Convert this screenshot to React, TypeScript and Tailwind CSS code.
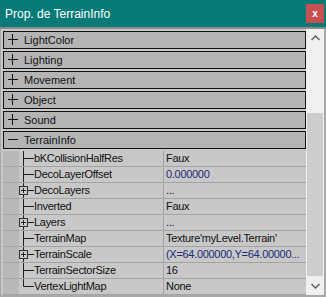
import React from "react";

const categories = [
  { name: "LightColor", open: false },
  { name: "Lighting", open: false },
  { name: "Movement", open: false },
  { name: "Object", open: false },
  { name: "Sound", open: false },
  { name: "TerrainInfo", open: true },
];

const props = [
  { name: "bKCollisionHalfRes", value: "Faux", kids: false, blue: false },
  { name: "DecoLayerOffset", value: "0.000000", kids: false, blue: true },
  { name: "DecoLayers", value: "...", kids: true, blue: false },
  { name: "Inverted", value: "Faux", kids: false, blue: false },
  { name: "Layers", value: "...", kids: true, blue: false },
  { name: "TerrainMap", value: "Texture'myLevel.Terrain'", kids: false, blue: false },
  { name: "TerrainScale", value: "(X=64.000000,Y=64.00000...", kids: true, blue: true },
  { name: "TerrainSectorSize", value: "16", kids: false, blue: false },
  { name: "VertexLightMap", value: "None", kids: false, blue: false },
];

function Category({ name, open }: { name: string; open: boolean }) {
  return (
    <div className="h-[18px] w-[303px] bg-[#b4b4b4] border border-[#111] flex items-center">
      <svg width="20" height="16" className="shrink-0">
        <line x1="4" y1="7.5" x2="14" y2="7.5" stroke="#111" strokeWidth="1" />
        {!open && <line x1="8.5" y1="2" x2="8.5" y2="13" stroke="#111" strokeWidth="1" />}
      </svg>
      <span className="text-[11px] text-[#111] leading-none">{name}</span>
    </div>
  );
}

function TreeMark({ kids, last }: { kids: boolean; last: boolean }) {
  return (
    <svg width="15" height="15" className="shrink-0">
      <line x1="4.5" y1="0" x2="4.5" y2={last ? 7.5 : 15} stroke="#222" strokeWidth="1" />
      <line x1="4.5" y1="7.5" x2="15" y2="7.5" stroke="#222" strokeWidth="1" />
      {kids && (
        <g>
          <rect x="0.5" y="3.5" width="8" height="8" fill="#c8c8c8" stroke="#333" strokeWidth="1" />
          <line x1="2" y1="7.5" x2="7" y2="7.5" stroke="#222" strokeWidth="1" />
          <line x1="4.5" y1="5" x2="4.5" y2="10" stroke="#222" strokeWidth="1" />
        </g>
      )}
    </svg>
  );
}

export default function App() {
  return (
    <div
      className="w-[326px] h-[297px] flex flex-col bg-[#c8c8c8] overflow-hidden"
      style={{ fontFamily: '"Liberation Sans", Arial, sans-serif' }}
    >
      <div className="h-[27px] bg-[#077977] flex items-center justify-between pl-[5px] pr-[2px] shrink-0">
        <span className="text-white text-[12px]">Prop. de TerrainInfo</span>
        <div className="w-[18px] h-[19px] bg-[#c75050] flex items-center justify-center">
          <span className="text-white text-[10px] font-bold leading-none">x</span>
        </div>
      </div>
      <div className="h-[2px] bg-[#8c8c8c] shrink-0" />
      <div className="flex flex-1 min-h-0 border-l border-l-[#a8a8a8] border-r-2 border-r-[#a8a8a8] border-b-2 border-b-[#a8a8a8]">
        <div className="flex-1 pl-[2px] pt-[2px] flex flex-col gap-[2px]">
          {categories.map((c) => (
            <Category key={c.name} name={c.name} open={c.open} />
          ))}
          <div className="flex flex-col w-[303px]">
            {props.map((p, i) => (
              <div key={p.name} className="h-[16px] flex border-b border-[#a4a4a4]">
                <div className="w-[16px] bg-[#b9b9b9] shrink-0" />
                <div className="w-[145px] flex items-center border-r border-[#a4a4a4] shrink-0">
                  <TreeMark kids={p.kids} last={i === props.length - 1} />
                  <span className="text-[11px] text-[#111] leading-none tracking-[-0.3px] whitespace-nowrap">{p.name}</span>
                </div>
                <div className="flex-1 flex items-center pl-[2px] overflow-hidden">
                  <span
                    className={
                      "text-[11px] leading-none tracking-[-0.3px] whitespace-nowrap " +
                      (p.blue ? "text-[#1b2a7a]" : "text-[#111]")
                    }
                  >
                    {p.value}
                  </span>
                </div>
              </div>
            ))}
          </div>
        </div>
        <div className="w-[18px] bg-[#f0f0f0] flex flex-col shrink-0">
          <div className="h-[17px] flex items-center justify-center">
            <svg width="9" height="6">
              <path d="M0.5 5 L4.5 1 L8.5 5" fill="none" stroke="#606060" strokeWidth="1.5" />
            </svg>
          </div>
          <div className="h-[67px]" />
          <div className="h-[163px] mx-[1px] bg-[#cdcdcd]" />
          <div className="flex-1 flex items-center justify-center">
            <svg width="9" height="6">
              <path d="M0.5 1 L4.5 5 L8.5 1" fill="none" stroke="#606060" strokeWidth="1.5" />
            </svg>
          </div>
        </div>
      </div>
    </div>
  );
}
